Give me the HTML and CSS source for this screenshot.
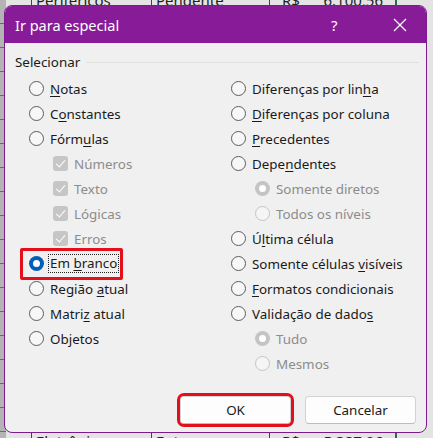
FILE: index.html
```html
<!DOCTYPE html>
<html lang="pt">
<head>
    <meta charset="UTF-8">
    <title>Ir para especial</title>
    <link rel="stylesheet" href="styles.css">
</head>
<body>
    <div class="sheet">
        <div class="sheet-row top">
            <div class="cell head"></div>
            <div class="cell name">Periféricos</div>
            <div class="cell status">Pendente</div>
            <div class="cell money"><span>R$</span><span>6.100,56</span></div>
            <div class="cell rest"></div>
        </div>
        <div class="sheet-row bottom">
            <div class="cell head"></div>
            <div class="cell name">Eletrônicos</div>
            <div class="cell status">Entregue</div>
            <div class="cell money"><span>R$</span><span>5.387,06</span></div>
            <div class="cell rest"></div>
        </div>
    </div>

    <div class="dialog">
        <div class="titlebar">
            <span class="title">Ir para especial</span>
            <span class="help">?</span>
            <svg class="close" width="14" height="14" viewBox="0 0 14 14">
                <path d="M1 1 L13 13 M13 1 L1 13" stroke="#fff" stroke-width="1.3" fill="none"/>
            </svg>
        </div>

        <div class="content">
            <div class="legend"><span>Selecionar</span><i></i></div>
            <div class="columns">
                <div class="col">
                    <div class="opt"><b class="radio"></b><span><u>N</u>otas</span></div>
                    <div class="opt"><b class="radio"></b><span>C<u>o</u>nstantes</span></div>
                    <div class="opt"><b class="radio"></b><span>Fórm<u>u</u>las</span></div>
                    <div class="opt sub off"><b class="check"></b><span>Números</span></div>
                    <div class="opt sub off"><b class="check"></b><span>Texto</span></div>
                    <div class="opt sub off"><b class="check"></b><span>Lógicas</span></div>
                    <div class="opt sub off"><b class="check"></b><span>Erros</span></div>
                    <div class="opt marked"><b class="radio on"></b><span class="focus">Em <u>b</u>ranco</span></div>
                    <div class="opt"><b class="radio"></b><span>Região <u>a</u>tual</span></div>
                    <div class="opt"><b class="radio"></b><span>Matri<u>z</u> atual</span></div>
                    <div class="opt"><b class="radio"></b><span>Objetos</span></div>
                </div>
                <div class="col">
                    <div class="opt"><b class="radio"></b><span>Diferenças por lin<u>h</u>a</span></div>
                    <div class="opt"><b class="radio"></b><span><u>D</u>iferenças por coluna</span></div>
                    <div class="opt"><b class="radio"></b><span><u>P</u>recedentes</span></div>
                    <div class="opt"><b class="radio"></b><span>Depe<u>n</u>dentes</span></div>
                    <div class="opt sub off"><b class="radio on"></b><span>Somente diretos</span></div>
                    <div class="opt sub off"><b class="radio"></b><span>Todos os níveis</span></div>
                    <div class="opt"><b class="radio"></b><span>Ú<u>l</u>tima célula</span></div>
                    <div class="opt"><b class="radio"></b><span>Somente células <u>v</u>isíveis</span></div>
                    <div class="opt"><b class="radio"></b><span><u>F</u>ormatos condicionais</span></div>
                    <div class="opt"><b class="radio"></b><span>Validação de dado<u>s</u></span></div>
                    <div class="opt sub off"><b class="radio on"></b><span>Tudo</span></div>
                    <div class="opt sub off"><b class="radio"></b><span>Mesmos</span></div>
                </div>
            </div>
        </div>

        <div class="footer">
            <button class="btn marked-btn">OK</button>
            <button class="btn">Cancelar</button>
        </div>
    </div>
</body>
</html>
```

FILE: styles.css
```css
body {
    margin: 0;
    width: 433px;
    height: 438px;
    overflow: hidden;
    position: relative;
    background: #e4e4e4;
    font-family: "Noto Sans", "Open Sans", sans-serif;
    color: #1a1a1a;
}
.sheet {
    height: 438px;
    display: flex;
    flex-direction: column;
    justify-content: space-between;
    background: repeating-linear-gradient(to bottom, #b4b4b4 0, #b4b4b4 23px, #6a6a6a 23px, #6a6a6a 24px);
    background-size: 6px 100%;
    background-repeat: repeat-y;
}
.sheet-row {
    display: flex;
    height: 24px;
    font-size: 15px;
    line-height: 24px;
    color: #222;
}
.sheet-row.top {
    margin-top: -12px;
}
.sheet-row.bottom {
    margin-bottom: -15px;
}
.cell {
    border-right: 1px solid #444;
    padding-left: 4px;
    box-sizing: border-box;
}
.cell.head {
    width: 32px;
    border-right: 1px solid #444;
}
.cell.name {
    width: 120px;
}
.cell.status {
    width: 118px;
}
.cell.money {
    width: 127px;
    display: flex;
    justify-content: space-between;
    padding: 0 12px 0 12px;
    border-right: 2px solid #217346;
}
.cell.rest {
    border: none;
}

.dialog {
    position: absolute;
    left: 4px;
    top: 5px;
    width: 423px;
    height: 428px;
    box-sizing: border-box;
    border: 1px solid #7d1a8f;
    border-radius: 8px;
    background: #f0f0f0;
    overflow: hidden;
    display: flex;
    flex-direction: column;
}
.titlebar {
    height: 37px;
    flex-shrink: 0;
    background: #871b98;
    color: #fff;
    display: flex;
    align-items: center;
    padding-left: 10px;
}
.title {
    font-size: 14.5px;
    flex: 1;
}
.help {
    font-size: 15px;
    width: 20px;
    margin-right: 42px;
}
.close {
    margin-right: 19px;
}

.content {
    flex: 1;
    padding: 10px 7px 0 10px;
    font-size: 13.4px;
}
.legend {
    display: flex;
    align-items: center;
    height: 18px;
    color: #1a1a1a;
}
.legend i {
    flex: 1;
    height: 1px;
    background: #e0e0e0;
    margin-left: 6px;
}
.columns {
    display: grid;
    grid-template-columns: 202px 1fr;
    padding: 5px 0 0 14px;
}
.opt {
    display: flex;
    align-items: center;
    height: 25px;
    white-space: nowrap;
}
.opt u {
    text-decoration-thickness: 1px;
    text-underline-offset: 2px;
}
.opt.sub {
    padding-left: 24px;
}
.opt.off {
    color: #8c8c8c;
}
.radio {
    width: 15px;
    height: 15px;
    box-sizing: border-box;
    border: 1px solid #5c5c5c;
    border-radius: 50%;
    background: #f7f7f7;
    margin-right: 6px;
    flex-shrink: 0;
    position: relative;
}
.radio.on {
    border: none;
    background: #005fb8;
}
.radio.on::after {
    content: "";
    position: absolute;
    left: 4px;
    top: 4px;
    width: 7px;
    height: 7px;
    border-radius: 50%;
    background: #fff;
}
.off .radio {
    border-color: #c4c4c4;
    background: #f5f5f5;
}
.off .radio.on {
    background: #c4c4c4;
}
.check {
    width: 15px;
    height: 15px;
    border-radius: 3px;
    background: #c6c6c6;
    margin-right: 6px;
    flex-shrink: 0;
    position: relative;
}
.check::after {
    content: "";
    position: absolute;
    left: 5px;
    top: 2px;
    width: 4px;
    height: 8px;
    border: solid #fff;
    border-width: 0 1.5px 1.5px 0;
    transform: rotate(40deg);
}
.marked {
    position: relative;
}
.marked::before {
    content: "";
    position: absolute;
    left: -9px;
    top: -3px;
    width: 97px;
    height: 26px;
    border: 3px solid #e3101c;
    border-radius: 2px;
}
.focus {
    outline: 1px dotted #222;
    outline-offset: 1px;
    line-height: 15px;
}

.footer {
    display: flex;
    justify-content: flex-end;
    gap: 14px;
    padding: 0 10px 8px 0;
}
.btn {
    width: 111px;
    height: 28px;
    font-family: inherit;
    font-size: 13.4px;
    color: #1a1a1a;
    background: #fdfdfd;
    border: 1px solid #d2d2d2;
    border-bottom-color: #bdbdbd;
    border-radius: 4px;
}
.marked-btn {
    outline: 3px solid #e3101c;
    outline-offset: 0;
}
```
